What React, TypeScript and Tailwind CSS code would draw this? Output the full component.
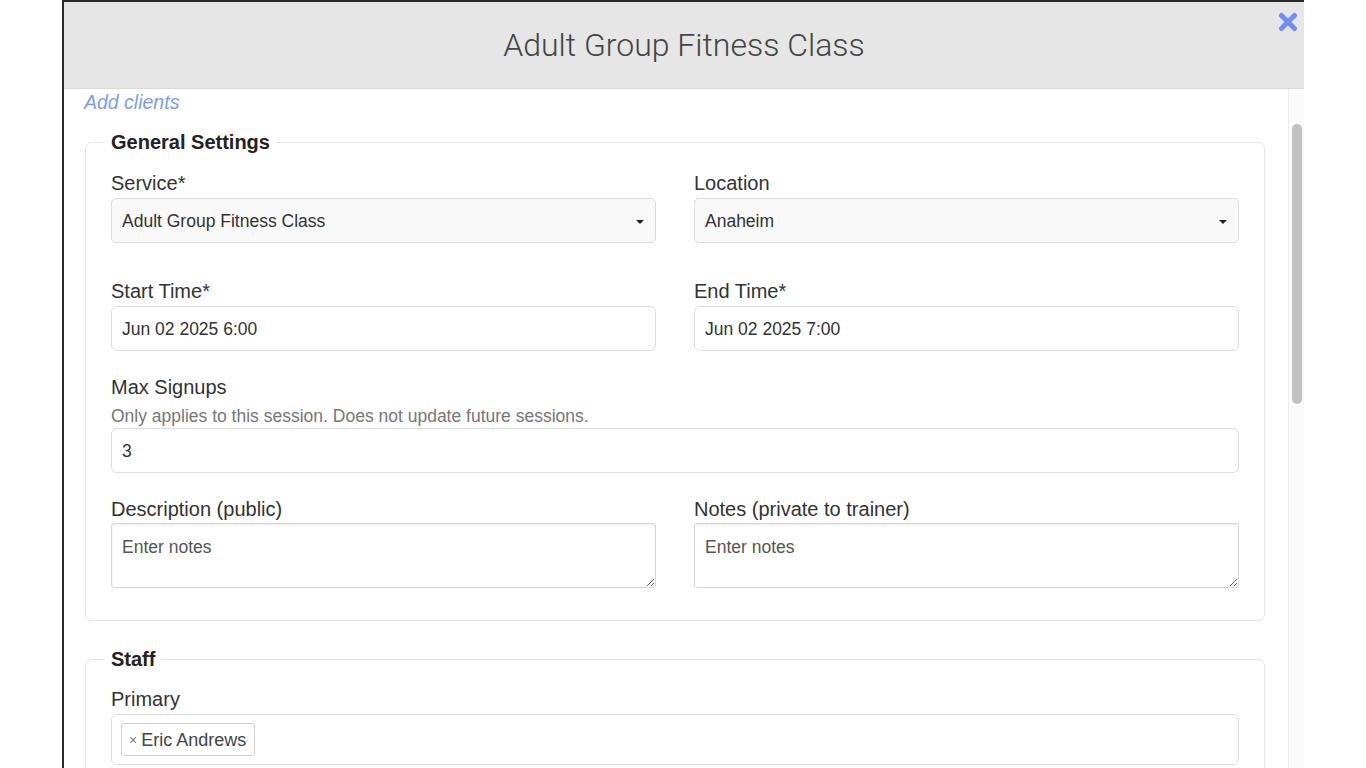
import React from "react";

const font = { fontFamily: '"Liberation Sans", Arial, sans-serif' };

function Label({ children }: { children: React.ReactNode }) {
  return <div className="text-[20px] leading-[24px] text-[#333]">{children}</div>;
}

function SelectBox({ value }: { value: string }) {
  return (
    <div className="mt-[3px] h-[45px] rounded-[5px] border border-[#dcdcdc] bg-[#f9f9f9] flex items-center justify-between pl-[10px] pr-[11px] pt-[2px] text-[17.5px] text-[#333]">
      <span>{value}</span>
      <span className="w-0 h-0 border-l-[4px] border-r-[4px] border-t-[4px] border-l-transparent border-r-transparent border-t-[#222]" />
    </div>
  );
}

function TextBox({ value }: { value: string }) {
  return (
    <div className="mt-[3px] h-[45px] rounded-[6px] border border-[#dcdcdc] bg-white flex items-center pl-[10px] pt-[2px] text-[17.5px] text-[#333]">
      {value}
    </div>
  );
}

function Area() {
  return (
    <textarea
      readOnly
      placeholder="Enter notes"
      className="mt-[2px] block w-full h-[65px] rounded-[3px] border border-[#d6d6d6] shadow-[inset_0_1px_2px_rgba(0,0,0,0.08)] bg-white px-[10px] pt-[12px] pb-[8px] text-[17.5px] leading-[22px] text-[#333] placeholder:text-[#555] outline-none"
    />
  );
}

export default function App() {
  return (
    <div className="w-full h-[768px] bg-white overflow-hidden" style={font}>
      <div className="ml-[62px] w-[1242px] h-[768px] border-l-2 border-t-2 border-[#2a2a2a] flex flex-col relative">
        <div className="h-[87px] shrink-0 bg-[#e6e6e6] border-b border-[#d9d9d9] flex items-center justify-center">
          <h1
            className="text-[32px] font-light text-[#444] mt-[-1px]"
            style={{ fontFamily: '"Roboto", "Liberation Sans", sans-serif' }}
          >
            Adult Group Fitness Class
          </h1>
        </div>
        <button className="absolute right-[6px] top-[10px] w-[20px] h-[20px]">
          <svg viewBox="0 0 20 20" width="20" height="20">
            <path d="M3.5 3.5 L16.5 16.5 M16.5 3.5 L3.5 16.5" stroke="#6f8ef8" strokeWidth="5" strokeLinecap="round" />
          </svg>
        </button>
        <div className="flex flex-1 min-h-0">
          <div className="flex-1 pl-[21px] pr-[23px]">
            <div className="text-[19.5px] leading-[24px] italic text-[#7b9cf7] mt-[1px] -ml-[1px]">Add clients</div>

            <fieldset className="mt-[16px] border border-[#e3e3e3] rounded-[7px] px-[25px] pb-[32px]">
              <legend className="-ml-[6px] px-[6px] text-[20px] leading-[24px] font-bold text-[#222]">
                General Settings
              </legend>
              <div className="mt-[17px] grid grid-cols-2 gap-x-[38px]">
                <div>
                  <Label>Service*</Label>
                  <SelectBox value="Adult Group Fitness Class" />
                </div>
                <div>
                  <Label>Location</Label>
                  <SelectBox value="Anaheim" />
                </div>
              </div>
              <div className="mt-[36px] grid grid-cols-2 gap-x-[38px]">
                <div>
                  <Label>Start Time*</Label>
                  <TextBox value="Jun 02 2025 6:00" />
                </div>
                <div>
                  <Label>End Time*</Label>
                  <TextBox value="Jun 02 2025 7:00" />
                </div>
              </div>
              <div className="mt-[24px]">
                <Label>Max Signups</Label>
                <div className="mt-[7px] text-[17.5px] leading-[20px] text-[#777]">
                  Only applies to this session. Does not update future sessions.
                </div>
                <div className="mt-[2px] h-[45px] rounded-[6px] border border-[#dcdcdc] bg-white flex items-center pl-[10px] pt-[2px] text-[17.5px] text-[#333]">
                  3
                </div>
              </div>
              <div className="mt-[24px] grid grid-cols-2 gap-x-[38px]">
                <div>
                  <Label>Description (public)</Label>
                  <Area />
                </div>
                <div>
                  <Label>Notes (private to trainer)</Label>
                  <Area />
                </div>
              </div>
            </fieldset>

            <fieldset className="mt-[26px] border border-[#e3e3e3] rounded-[7px] px-[25px] pb-[32px]">
              <legend className="-ml-[6px] px-[6px] text-[20px] leading-[24px] font-bold text-[#222]">Staff</legend>
              <div className="mt-[16px]">
                <Label>Primary</Label>
                <div className="mt-[3px] h-[51px] rounded-[6px] border border-[#dcdcdc] bg-white flex items-center pl-[9px]">
                  <div className="h-[33px] rounded-[3px] border border-[#cfcfcf] bg-white flex items-center pl-[7px] pr-[8px] pt-[2px] text-[18px] text-[#444]">
                    <span className="text-[14px] text-[#777] mr-[4px]">×</span>
                    Eric Andrews
                  </div>
                </div>
              </div>
            </fieldset>
          </div>
          <div className="w-[16px] shrink-0 border-l border-[#ececec] bg-[#fafafa] pt-[35px] flex justify-center">
            <div className="w-[10px] h-[280px] rounded-full bg-[#c1c1c1] ml-[1px]" />
          </div>
        </div>
      </div>
    </div>
  );
}
